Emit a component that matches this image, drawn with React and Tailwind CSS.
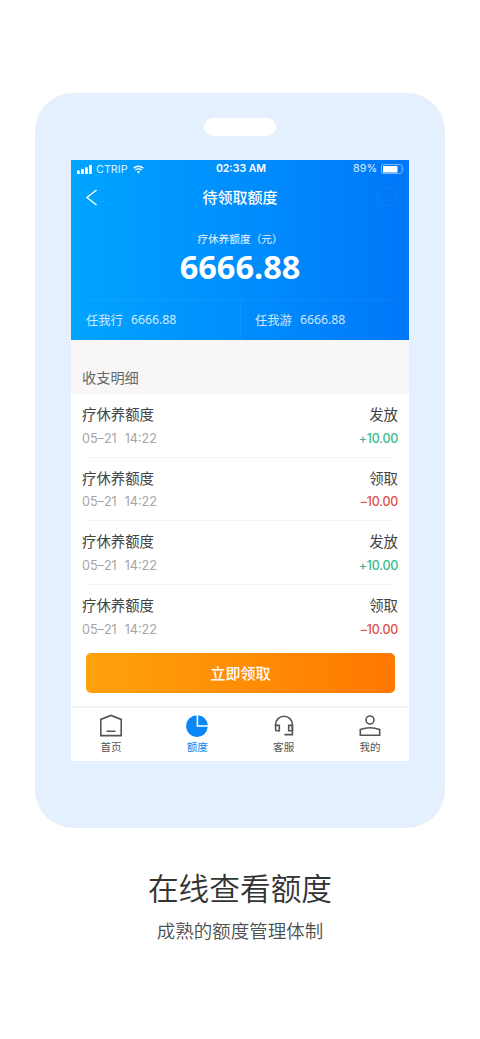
import React from "react";

const rows = [
  { type: "发放", amount: "+10.00", tone: "text-[#3dbb8c]" },
  { type: "领取", amount: "–10.00", tone: "text-[#d9534b]" },
  { type: "发放", amount: "+10.00", tone: "text-[#3dbb8c]" },
  { type: "领取", amount: "–10.00", tone: "text-[#d9534b]" },
];

function StatusBar() {
  return (
    <div className="grid h-[18px] grid-cols-3 items-center pl-[6px] pr-[4px] font-['Inter','Liberation_Sans',sans-serif] text-[10.5px] leading-[18px]">
      <div className="flex items-center text-white/85">
        <svg className="mr-[4px] h-[9px] w-[15px]" viewBox="0 0 15 9" fill="#fff">
          <rect x="0" y="5.5" width="2.8" height="3.5" rx=".5" />
          <rect x="4" y="4" width="2.8" height="5" rx=".5" />
          <rect x="8" y="2.2" width="2.8" height="6.8" rx=".5" />
          <rect x="12" y="0" width="2.8" height="9" rx=".5" />
        </svg>
        <span className="text-[10.8px] leading-[17px]">CTRIP</span>
        <svg className="ml-[5px] h-[9px] w-[11px]" viewBox="0 0 11 9" fill="none" stroke="#fff" strokeWidth="1.4">
          <path d="M.6 3.3a7 7 0 0 1 9.8 0M2.4 5.3a4.4 4.4 0 0 1 6.2 0" />
          <path d="M3.9 6.8 5.5 8.6 7.1 6.8a2.3 2.3 0 0 0-3.2 0z" fill="#fff" stroke="none" />
        </svg>
      </div>
      <div className="whitespace-nowrap text-center font-semibold">02:33 AM</div>
      <div className="flex items-center justify-end text-white/85">
        <span className="text-[10.8px]">89%</span>
        <svg className="ml-[4px] h-[10px] w-[24px]" viewBox="0 0 24 10">
          <rect x=".5" y=".5" width="20.5" height="9" rx="1.5" fill="none" stroke="#fff" strokeOpacity=".45" />
          <rect x="2" y="2" width="14.5" height="6.5" fill="#fff" />
          <path d="M22 3.5q1.4 1.5 0 3z" fill="#fff" fillOpacity=".6" />
        </svg>
      </div>
    </div>
  );
}

function Tab({ label, active, children }) {
  return (
    <div className={`flex w-[22px] flex-col items-center ${active ? "text-[#0a86f5]" : "text-[#555]"}`}>
      <svg className="h-[24px] w-[24px] shrink-0" viewBox="0 0 24 24" fill="none" stroke="currentColor" strokeWidth="1.6">
        {children}
      </svg>
      <span className="mt-[2px] whitespace-nowrap text-[10.6px] leading-[16px]">{label}</span>
    </div>
  );
}

export default function App() {
  return (
    <main className="flex h-[1039px] w-[480px] flex-col items-center bg-white pt-[93px] font-['Noto_Sans_CJK_SC',sans-serif]">
      <section className="flex h-[735px] w-[410px] flex-col items-center rounded-[38px] bg-[#e4f0fd] pt-[25px]">
        <div className="h-[18px] w-[72px] shrink-0 rounded-full bg-white" />
        <div className="mt-[24px] flex h-[601px] w-[338px] flex-col bg-white">
          <header className="flex h-[180px] shrink-0 flex-col bg-linear-to-r from-[#00a4ff] to-[#0077f9] text-white">
            <StatusBar />
            <div className="grid h-[38px] grid-cols-[40px_1fr_40px] items-center">
              <svg className="ml-[14px] mt-px h-[17px] w-[13px]" viewBox="0 0 13 17" fill="none" stroke="#fff" strokeWidth="1.4">
                <path d="M11.5 1 2 8.5l9.5 7.5" />
              </svg>
              <h1 className="text-center text-[15px] font-medium leading-[22px]">待领取额度</h1>
              <svg className="ml-[8px] h-[20px] w-[20px]" viewBox="0 0 20 20" fill="none" stroke="#2c92ff" strokeOpacity=".3" strokeWidth="1">
                <circle cx="10" cy="10" r="9" />
                <path d="M7.5 8a2.5 2.5 0 1 1 3.7 2.1c-.8.5-1.2.9-1.2 1.9M10 13.5v1.2" />
              </svg>
            </div>
            <p className="mt-[15px] text-center text-[10.7px] leading-[16px] text-white/90">疗休养额度（元）</p>
            <p className="text-center font-['Noto_Sans',sans-serif] text-[32.5px] font-bold leading-[40px]">6666.88</p>
            <div className="ml-[15px] mr-[13px] mt-[12px] grid h-[41px] grid-cols-2 border-t border-white/5 text-[12.3px] leading-[40px] text-white/80">
              <div className="flex gap-[8px] border-r border-white/5">
                <span>任我行</span>
                <span className="font-['Noto_Sans',sans-serif]">6666.88</span>
              </div>
              <div className="flex gap-[8px] pl-[14px]">
                <span>任我游</span>
                <span className="font-['Noto_Sans',sans-serif]">6666.88</span>
              </div>
            </div>
          </header>
          <h2 className="h-[54px] shrink-0 bg-[#f8f6f6] pl-[11px] pt-[27px] text-[14.2px] leading-[20px] text-[#666]">收支明细</h2>
          <ul className="shrink-0">
            {rows.map((row, i) => (
              <li key={i} className="h-[63.6px] px-[11px] pt-[10px]">
                <div className="flex justify-between text-[14.4px] leading-[20px] text-[#444]">
                  <span>疗休养额度</span>
                  <span>{row.type}</span>
                </div>
                <div className="mt-[4.8px] flex justify-between font-['Inter','Liberation_Sans',sans-serif] text-[12.6px] leading-[20px]">
                  <span className="flex gap-[8px] text-[#a5a5a5]">
                    <span>05–21</span>
                    <span>14:22</span>
                  </span>
                  <span className={`text-[12.4px] tracking-[-0.2px] font-medium ${row.tone}`}>{row.amount}</span>
                </div>
                {i < rows.length - 1 && <div className="mx-[3px] mt-[7.8px] h-px bg-[#f5f5f5]" />}
              </li>
            ))}
          </ul>
          <button className="ml-[15px] mt-[5px] h-[39.6px] w-[309px] shrink-0 rounded-[5px] bg-linear-to-r from-[#ffa20c] to-[#ff7800] pb-[2px] text-[15px] font-medium leading-[37px] text-white">
            立即领取
          </button>
          <nav className="mt-[13.4px] flex h-[54px] justify-between border-t-2 border-[#f4f4f5] pl-[29px] pr-[28px] pt-[5px]">
            <Tab label="首页">
              <path d="M1.8 22.6V6.4L12 2.4l10.2 4v16.2zM7.5 18.2h9" />
            </Tab>
            <Tab label="额度" active>
              <path d="M11.6 2.2v11.6h11.2A10.9 10.9 0 1 1 11.6 2.2z" fill="currentColor" stroke="none" />
              <path d="M13.2 2.2a10.9 10.9 0 0 1 9.6 10H13.2z" fill="currentColor" stroke="none" />
            </Tab>
            <Tab label="客服">
              <path d="M3.6 13v-1.4a8.4 8.4 0 0 1 16.8 0v10h-8" />
              <path d="M3.6 12.4h3.7v5.4H5q-1.4 0-1.4-1.4zM20.4 12.4h-3.7v5.4h3.7z" />
            </Tab>
            <Tab label="我的">
              <circle cx="12" cy="7" r="4" />
              <path d="M2.3 22.2v-5.7c6-2.2 13.4-2.2 19.4 0v5.7z" />
            </Tab>
          </nav>
        </div>
      </section>
      <h3 className="mt-[37px] text-[30.7px] font-[350] leading-[44px] text-[#333]">在线查看额度</h3>
      <p className="mt-[7px] text-[18.5px] font-[350] leading-[28px] text-[#505050]">成熟的额度管理体制</p>
    </main>
  );
}
